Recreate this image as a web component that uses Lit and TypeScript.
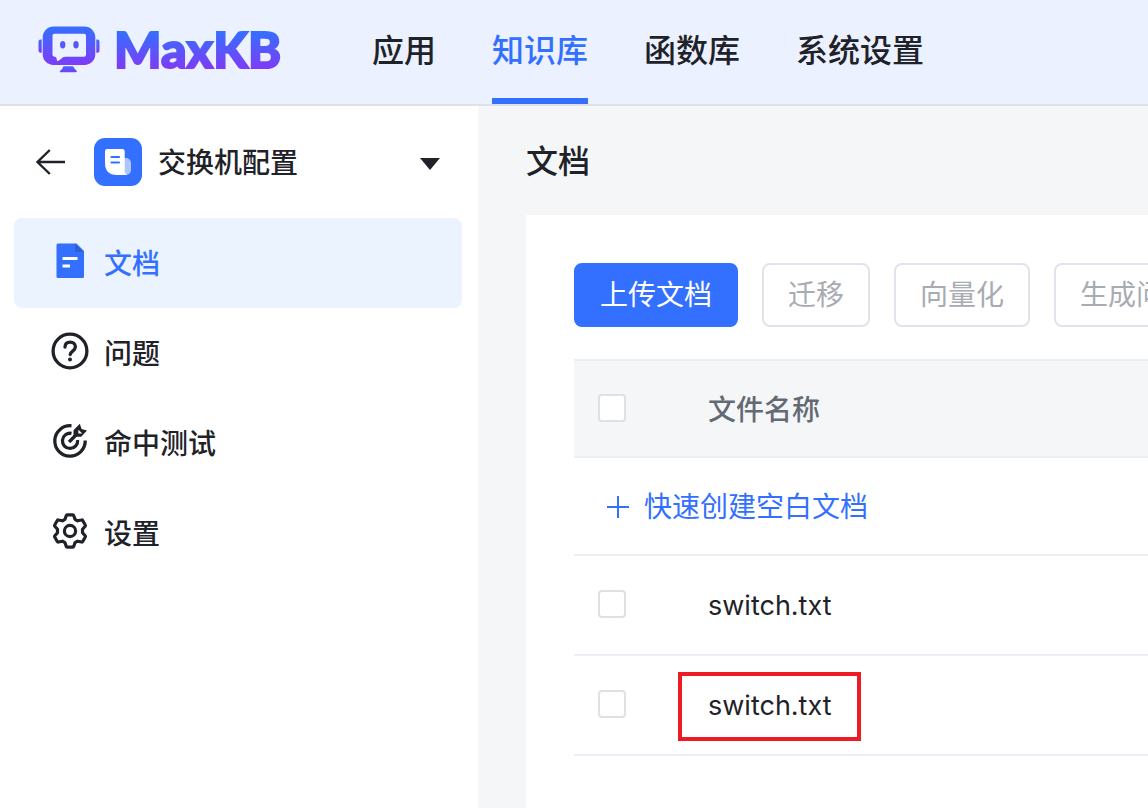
import { LitElement, html, css, svg } from "lit";
import { customElement, property, state } from "lit/decorators.js";

type MenuItem = { id: string; label: string };

const menuIcons: Record<string, unknown> = {
  doc: svg`
    <path d="M8 2.500h18.500L34 10v25.500a1.500 1.500 0 0 1-1.500 1.500H8A1.500 1.500 0 0 1 6.500 35.500V4A1.500 1.500 0 0 1 8 2.500z" fill="#3370ff"/>
    <path d="M25 2.500 33.500 11H26.500A1.500 1.500 0 0 1 25 9.500z" fill="#2b5fd9"/>
    <path d="M12.500 17.500h15M12.500 25h7.500" stroke="#fff" stroke-width="3" fill="none"/>`,
  question: svg`
    <g fill="none" stroke="#1f2329" stroke-width="3.300">
      <circle cx="20" cy="20" r="16.900"/>
      <path stroke-linecap="round" d="M15 16c.2-3 2.300-4.800 5.100-4.800 3.200 0 5.300 1.900 5.300 4.600 0 4.200-4.800 4.200-5.200 7.700"/>
    </g>
    <circle cx="20" cy="28.600" r="2" fill="#1f2329"/>`,
  target: svg`
    <g fill="none" stroke="#1f2329" stroke-width="3.300">
      <path d="M21.500 4.800A15.200 15.200 0 1 0 35.200 19.500"/>
      <path d="M21.500 12.400A7.600 7.600 0 1 0 27.600 19"/>
      <path d="M19 21l7-7"/>
    </g>
    <path d="M23.500 9.200 29.800 2.800 31.600 7.900 37 9.500 31.200 15.800H23.500z" fill="#1f2329"/>
    <path d="M28.400 8.800v3.800h3.800z" fill="#fff"/>`,
  setting: svg`
    <g fill="none" stroke="#1f2329" stroke-width="3.200" stroke-linejoin="round">
      <path d="M17.300 3.800h5.400a1 1 0 0 1 1 .7l1.300 3.800 2.600 1.500 4-.8a1 1 0 0 1 1.100.5l2.600 4.500a1 1 0 0 1-.1 1.200l-2.700 3.100v3.400l2.700 3.100a1 1 0 0 1 .1 1.200l-2.600 4.500a1 1 0 0 1-1.100.5l-4-.8-2.600 1.500-1.300 3.800a1 1 0 0 1-1 .7h-5.400a1 1 0 0 1-1-.7L15 31.700l-2.600-1.500-4 .8a1 1 0 0 1-1.100-.5L4.700 26a1 1 0 0 1 .1-1.200l2.700-3.100v-3.400l-2.700-3.100a1 1 0 0 1-.1-1.200l2.600-4.500a1 1 0 0 1 1.100-.5l4 .8L15 8.300l1.300-3.800a1 1 0 0 1 1-.7z"/>
      <circle cx="20" cy="20" r="5.600"/>
    </g>`,
};

const base = css`
  * { box-sizing: border-box; }
  button { font: inherit; color: inherit; background: none; border: 0; padding: 0; margin: 0; cursor: pointer; }
  a { color: inherit; text-decoration: none; }
  svg { display: block; flex: none; }
`;

@customElement("kb-header")
export class KbHeader extends LitElement {
  @state() private active = "知识库";

  static styles = [base, css`
    :host { display: block; background: #ebf1ff; border-bottom: 2px solid #dee0e3; }
    .bar { display: flex; height: 104px; padding-left: 38px; }
    .logo { display: flex; align-items: center; gap: 14px; width: 334px; flex: none; padding-bottom: 6px; }
    .brand {
      font: 900 50px/60px Lato, sans-serif;
      background: linear-gradient(#3370ff 12px, #7f3bf5 50px);
      -webkit-background-clip: text;
      background-clip: text;
      color: transparent;
      -webkit-text-stroke: 2px transparent;
    }
    .nav { display: flex; gap: 56px; }
    .tab {
      display: flex; align-items: center; white-space: nowrap;
      font-size: 32px; line-height: 48px; font-weight: 500;
      border-bottom: 6px solid transparent; padding-top: 4px;
    }
    .tab.active { color: #3370ff; border-color: #3370ff; }
  `];

  render() {
    const tabs = ["应用", "知识库", "函数库", "系统设置"];
    return html`
      <header class="bar">
        <a class="logo" href="#" aria-label="MaxKB">
          <svg width="62" height="48" viewBox="38 25 62 48" aria-hidden="true">
            <defs>
              <linearGradient id="g" x1="0" y1="26" x2="0" y2="66" gradientUnits="userSpaceOnUse">
                <stop offset="0" stop-color="#3370ff"/><stop offset="1" stop-color="#7f3bf5"/>
              </linearGradient>
              <linearGradient id="e" x1="0" y1="39" x2="0" y2="53" gradientUnits="userSpaceOnUse">
                <stop offset="0" stop-color="#3370ff"/><stop offset="1" stop-color="#7f3bf5"/>
              </linearGradient>
              <linearGradient id="f" x1="0" y1="65" x2="0" y2="73" gradientUnits="userSpaceOnUse">
                <stop offset="0" stop-color="#3370ff"/><stop offset="1" stop-color="#7f3bf5"/>
              </linearGradient>
            </defs>
            <path fill="url(#g)" fill-rule="evenodd" d="M53.500 26.500H84.500A10.800 10.800 0 0 1 95.300 37.300V54.200A10.800 10.800 0 0 1 84.500 65H53.500A10.800 10.800 0 0 1 42.700 54.200V37.300A10.800 10.800 0 0 1 53.500 26.500zM54.500 33.800Q52.500 33.800 52.500 35.800V55Q52.500 56.700 55 56.700Q57 57.500 57 61.300Q60 60.500 62 58Q63.500 56.700 66 56.700H84Q86 56.700 86 54.700V35.800Q86 33.800 84 33.800z"/>
            <ellipse cx="62.700" cy="44.800" rx="2.700" ry="3.700" fill="url(#g)"/>
            <ellipse cx="76" cy="44.800" rx="2.700" ry="3.700" fill="url(#g)"/>
            <path fill="url(#e)" d="M41.700 39.500V52.700H40.500a2 2 0 0 1-2-2v-9.200a2 2 0 0 1 2-2zM96.300 39.500V52.700h1.200a2 2 0 0 0 2-2v-9.200a2 2 0 0 0-2-2z"/>
            <path fill="url(#f)" d="M63.500 66.300H73Q74.500 69 76.500 70.500Q77.500 72.200 76 72.200H60.500Q59 72.200 60.500 70.500Q62.500 69 63.500 66.300z"/>
          </svg>
          <span class="brand">MaxKB</span>
        </a>
        <nav class="nav">
          ${tabs.map((t) => html`<a href="#" class="tab ${t === this.active ? "active" : ""}"
            @click=${(e: Event) => { e.preventDefault(); this.active = t; }}>${t}</a>`)}
        </nav>
      </header>`;
  }
}

@customElement("kb-sidebar")
export class KbSidebar extends LitElement {
  @property({ attribute: false }) items: MenuItem[] = [];
  @state() private active = "doc";

  static styles = [base, css`
    :host { display: block; background: #fff; padding: 0 16px 0 14px; font-weight: 500; font-size: 28px; line-height: 44px; }
    .head { display: flex; align-items: center; height: 112px; padding: 0 22px 0 20px; }
    .picker { display: flex; align-items: center; flex: 1; gap: 16px; margin-left: 28px; text-align: left; }
    .name { flex: 1; padding-top: 2px; }
    .caret { margin-top: 4px; }
    .item { display: flex; align-items: center; gap: 14px; height: 90px; padding: 2px 36px 0; border-radius: 8px; }
    .item.active { background: #ebf3ff; color: #3370ff; }
    .item svg { margin-bottom: 6px; }
  `];

  render() {
    return html`
      <div class="head">
        <button aria-label="返回">
          <svg width="32" height="28" viewBox="0 0 32 28" fill="none" stroke="#1f2329" stroke-width="2.400">
            <path d="M15.800 2 3.500 14 15.800 26M3.500 14H31"/>
          </svg>
        </button>
        <button class="picker">
          <svg width="48" height="48" viewBox="0 0 48 48">
            <rect width="48" height="48" rx="11" fill="#3370ff"/>
            <path d="M30.500 20H32a5 5 0 0 1 5 5v7a5 5 0 0 1-5 5H27z" fill="#adc6ff"/>
            <path d="M13 11H28.500A2.200 2.200 0 0 1 30.700 13.200V32Q30.700 36 33 37H23Q11 37 11 25V13A2 2 0 0 1 13 11z" fill="#fff"/>
            <path d="M17.500 19h7.500M17.500 24.500h7.500" stroke="#3370ff" stroke-width="2.200" stroke-linecap="round"/>
          </svg>
          <span class="name">交换机配置</span>
          <svg class="caret" width="20" height="12" viewBox="0 0 20 12"><path d="M0 0H20L10 12z" fill="#1f2329"/></svg>
        </button>
      </div>
      <nav>
        ${this.items.map((m) => html`<a href="#" class="item ${m.id === this.active ? "active" : ""}"
          @click=${(e: Event) => { e.preventDefault(); this.active = m.id; }}>
          <svg width="40" height="40" viewBox="0 0 40 40">${menuIcons[m.id]}</svg>
          <span>${m.label}</span></a>`)}
      </nav>`;
  }
}

@customElement("kb-documents")
export class KbDocuments extends LitElement {
  @property({ attribute: false }) files: { name: string; marked: boolean }[] = [];

  static styles = [base, css`
    :host { display: flex; flex-direction: column; background: #f5f6f7; padding-left: 48px; min-width: 0; overflow: hidden; font-size: 28px; line-height: 44px; }
    .title { margin: 0; font-size: 32px; line-height: 48px; font-weight: 500; padding: 32px 0 29px; }
    .card { flex: 1; background: #fff; padding: 48px 0 0 48px; }
    .actions { display: flex; gap: 24px; margin-bottom: 32px; }
    .btn { flex: none; height: 64px; padding: 0 24px; border: 2px solid #dfe4ec; border-radius: 8px; color: #a8abb2; white-space: nowrap; }
    .btn.primary { background: #3370ff; border-color: #3370ff; color: #fff; }
    table { width: 100%; border-collapse: separate; border-spacing: 0; }
    th, td { height: 100px; padding: 2px 0 0; text-align: left; border-bottom: 2px solid #ebeef5; font-weight: 400; }
    th { height: 99px; background: #f5f6f7; border-top: 2px solid #ebeef5; color: #646a73; font-weight: 500; }
    .pick { width: 134px; padding: 0 0 2px 24px; }
    .create { height: 98px; padding-left: 32px; color: #3370ff; }
    .create button { display: flex; align-items: center; gap: 14px; }
    .box { appearance: none; display: block; width: 28px; height: 28px; margin: 0; border: 2px solid #dee0e3; border-radius: 4px; background: #fff; }
    .box:checked { background: #3370ff; border-color: #3370ff; }
    .file { position: relative; display: block; width: fit-content; font-size: 27px; }
    .mark { position: absolute; inset: -12px -29px -13px -30px; border: 4px solid #ed1c24; pointer-events: none; }
  `];

  render() {
    return html`
      <h1 class="title">文档</h1>
      <section class="card">
        <div class="actions">
          <button class="btn primary">上传文档</button>
          <button class="btn" disabled>迁移</button>
          <button class="btn" disabled>向量化</button>
          <button class="btn" disabled>生成问题</button>
        </div>
        <table>
          <thead>
            <tr>
              <th class="pick"><input class="box" type="checkbox" aria-label="全选"></th>
              <th>文件名称</th>
            </tr>
          </thead>
          <tbody>
            <tr><td class="create" colspan="2"><button>
              <svg width="24" height="24" viewBox="0 0 24 24" stroke="#3370ff" stroke-width="2"><path d="M1 12H23M12 1V23"/></svg>
              快速创建空白文档</button></td></tr>
            ${this.files.map((f) => html`<tr>
              <td class="pick"><input class="box" type="checkbox" aria-label=${f.name}></td>
              <td><span class="file">${f.name}${f.marked ? html`<span class="mark"></span>` : ""}</span></td>
            </tr>`)}
          </tbody>
        </table>
      </section>`;
  }
}

@customElement("app-root")
export class AppRoot extends LitElement {
  static styles = css`
    :host { display: flex; flex-direction: column; min-height: 100vh; color: #1f2329; background: #fff; font-family: Inter, "Noto Sans CJK SC", sans-serif; }
    .body { flex: 1; display: grid; grid-template-columns: 478px minmax(0, 1fr); }
  `;

  render() {
    return html`
      <kb-header></kb-header>
      <div class="body">
        <kb-sidebar .items=${[
          { id: "doc", label: "文档" },
          { id: "question", label: "问题" },
          { id: "target", label: "命中测试" },
          { id: "setting", label: "设置" },
        ]}></kb-sidebar>
        <kb-documents .files=${[
          { name: "switch.txt", marked: false },
          { name: "switch.txt", marked: true },
        ]}></kb-documents>
      </div>`;
  }
}
